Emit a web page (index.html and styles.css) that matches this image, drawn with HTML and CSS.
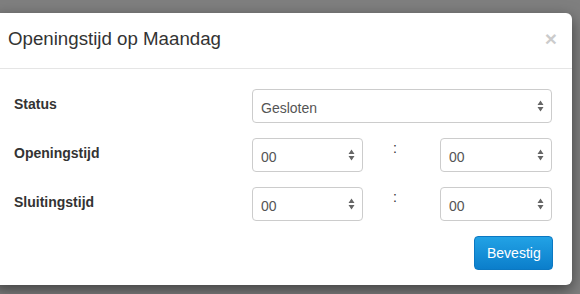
FILE: index.html
```html
<!DOCTYPE html>
<html lang="nl">
<head>
    <meta charset="UTF-8">
    <meta name="viewport" content="width=device-width, initial-scale=1.0">
    <title>Openingstijd op Maandag</title>
    <link rel="stylesheet" href="styles.css">
</head>
<body>
    <div class="modal-dialog">
        <div class="modal-content">
            <div class="modal-header">
                <button class="close" type="button">&times;</button>
                <h4 class="modal-title">Openingstijd op Maandag</h4>
            </div>

            <div class="modal-body">
                <div class="form-row">
                    <label class="form-label">Status</label>
                    <select class="form-select">
                        <option>Gesloten</option>
                        <option>Geopend</option>
                    </select>
                </div>

                <div class="form-row">
                    <label class="form-label">Openingstijd</label>
                    <div class="time-group">
                        <select class="form-select"><option>00</option></select>
                        <span class="colon">:</span>
                        <select class="form-select"><option>00</option></select>
                    </div>
                </div>

                <div class="form-row">
                    <label class="form-label">Sluitingstijd</label>
                    <div class="time-group">
                        <select class="form-select"><option>00</option></select>
                        <span class="colon">:</span>
                        <select class="form-select"><option>00</option></select>
                    </div>
                </div>

                <div class="form-actions">
                    <button class="btn-primary" type="button">Bevestig</button>
                </div>
            </div>
        </div>
    </div>
</body>
</html>
```

FILE: styles.css
```css
* {
    margin: 0;
    padding: 0;
    box-sizing: border-box;
}

body {
    font-family: 'Liberation Sans', Arial, sans-serif;
    font-size: 14px;
    line-height: 20px;
    color: #333;
    background: #7f7f7f;
    overflow: hidden;
    height: 294px;
}

.modal-dialog {
    padding-top: 13px;
}

.modal-content {
    margin-left: -7px;
    width: 579px;
    background: #fff;
    border-radius: 6px;
    box-shadow: 0 5px 15px rgba(0,0,0,0.5);
}

.modal-header {
    padding: 13px 15px 16px;
    border-bottom: 1px solid #e5e5e5;
}

.modal-title {
    font-size: 18.7px;
    line-height: 26px;
    font-weight: normal;
    color: #333;
}

.close {
    float: right;
    background: none;
    border: none;
    font-family: 'Liberation Sans', Arial, sans-serif;
    font-size: 21px;
    font-weight: bold;
    line-height: 26px;
    color: #000;
    opacity: 0.2;
    cursor: pointer;
}

.modal-body {
    padding: 20px 20px 15px 21px;
}

.form-row {
    display: grid;
    grid-template-columns: 238px 300px;
    margin-bottom: 15px;
}

.form-label {
    font-weight: bold;
    padding-top: 5px;
}

.form-select {
    appearance: none;
    -webkit-appearance: none;
    width: 100%;
    height: 34px;
    padding: 3px 8px 0;
    font-family: 'Liberation Sans', Arial, sans-serif;
    font-size: 14px;
    color: #555;
    border: 1px solid #ccc;
    border-radius: 4px;
    background: #fff url("data:image/svg+xml,%3Csvg xmlns='http://www.w3.org/2000/svg' width='7' height='12' viewBox='0 0 7 12'%3E%3Cpath d='M0.5 5L3.5 0.5L6.5 5Z M0.5 7L3.5 11.5L6.5 7Z' fill='%23666'/%3E%3C/svg%3E") no-repeat right 7px center;
}

.time-group {
    display: grid;
    grid-template-columns: 111px 77px 112px;
}

.colon {
    padding-left: 30px;
    line-height: 20px;
    color: #333;
}

.form-actions {
    text-align: right;
    margin-right: -1px;
}

.btn-primary {
    font-family: 'Liberation Sans', Arial, sans-serif;
    font-size: 14px;
    line-height: 20px;
    color: #fff;
    padding: 6px 12px;
    height: 34px;
    width: 79px;
    border: 1px solid #0b78c2;
    border-radius: 4px;
    background: linear-gradient(#22a2e5, #0b7ecb);
    cursor: pointer;
}
```
